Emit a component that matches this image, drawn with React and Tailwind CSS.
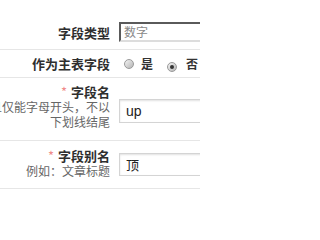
const font = { fontFamily: '"Noto Sans CJK SC", "Liberation Sans", sans-serif' };

const Radio = ({ checked }) => (
  <span className="relative inline-flex w-[10px] h-[10px] rounded-full border border-[#9a9a9a] bg-gradient-to-br from-[#f4f4f4] to-[#b5b5b5] items-center justify-center">
    {checked && <span className="w-[4px] h-[4px] rounded-full bg-[#333]" />}
  </span>
);

const Label = ({ req, children }) => (
  <p className="text-[13px] font-bold leading-[14px] text-[#2e2e2e] whitespace-nowrap">
    {req && <span className="text-[#f08a8a] font-normal mr-[4px]">*</span>}
    {children}
  </p>
);

const App = () => {
  return (
    <div className="w-[200px] h-[200px] overflow-hidden bg-white text-[#333]" style={font}>
      {/* 字段类型 */}
      <div className="flex h-[50px] border-b border-[#e6e6e6]">
        <div className="w-[110px] shrink-0 flex justify-end pt-[26px]">
          <Label>字段类型</Label>
        </div>
        <div className="ml-[9px] mt-[22px] w-[120px] h-[20px] shrink-0 border-2 border-t-[#5a5a5a] border-l-[#5a5a5a] border-r-[#ddd] border-b-[#ddd] bg-white flex items-center pl-[3px] text-[12px] text-[#888]">
          数字
        </div>
      </div>

      {/* 作为主表字段 */}
      <div className="flex h-[28px] items-center border-b border-[#e6e6e6]">
        <div className="w-[110px] shrink-0 flex justify-end">
          <Label>作为主表字段</Label>
        </div>
        <div className="ml-[14px] flex items-center text-[12px] font-bold text-[#333]">
          <Radio />
          <span className="ml-[7px]">是</span>
          <span className="ml-[14px]"><Radio checked /></span>
          <span className="ml-[9px]">否</span>
        </div>
      </div>

      {/* 字段名 */}
      <div className="flex h-[63px] border-b border-[#e6e6e6]">
        <div className="w-[110px] shrink-0 flex flex-col items-end pt-[7px]">
          <Label req>字段名</Label>
          <div className="flex justify-end w-[110px]">
            <p className="text-[12px] leading-[15px] text-[#666] whitespace-nowrap">且仅能字母开头，不以</p>
          </div>
          <p className="text-[12px] leading-[15px] text-[#666] whitespace-nowrap">下划线结尾</p>
        </div>
        <div className="ml-[9px] mt-[21px] w-[120px] h-[24px] shrink-0 border border-[#d4d4d4] shadow-[inset_0_1px_2px_rgba(0,0,0,0.12)] flex items-center pl-[6px] text-[14px] text-[#222]" style={{ fontFamily: '"Liberation Sans", sans-serif' }}>
          up
        </div>
      </div>

      {/* 字段别名 */}
      <div className="flex h-[48px] border-b border-[#e6e6e6]">
        <div className="w-[110px] shrink-0 flex flex-col items-end pt-[8px]">
          <Label req>字段别名</Label>
          <p className="text-[12px] leading-[16px] text-[#666] whitespace-nowrap">例如：文章标题</p>
        </div>
        <div className="ml-[9px] mt-[12px] w-[120px] h-[23px] shrink-0 border border-[#d4d4d4] shadow-[inset_0_1px_2px_rgba(0,0,0,0.12)] flex items-center pl-[6px] text-[13px] text-[#222]">
          顶
        </div>
      </div>
    </div>
  );
};

export default App;
